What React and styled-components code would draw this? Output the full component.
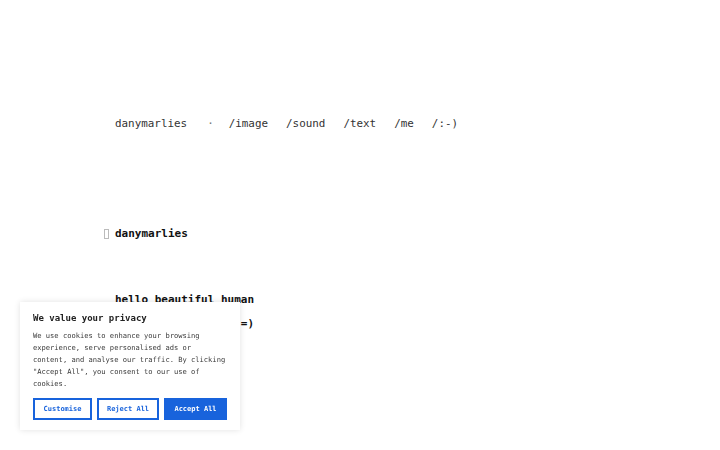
import React from "react";
import styled, { createGlobalStyle } from "styled-components";

const GlobalStyle = createGlobalStyle`
  html, body {
    margin: 0;
    padding: 0;
    background: #ffffff;
  }
  body {
    font-family: "DejaVu Sans Mono", "Liberation Mono", monospace;
    color: #2b2b2b;
  }
`;

const Page = styled.div`
  padding: 117px 0 0 115px;
  min-height: 450px;
  box-sizing: border-box;
`;

const Nav = styled.nav`
  display: flex;
  align-items: center;
  font-size: 10.9px;
  line-height: 14px;
  color: #333;
`;

const NavLink = styled.a`
  color: inherit;
  text-decoration: none;
  margin-right: ${p => p.gap || 18}px;
`;

const Dot = styled.span`
  margin-right: 15px;
  color: #777;
`;

const Main = styled.main`
  margin-top: 96px;
  font-size: 11px;
  font-weight: bold;
  color: #111;
`;

const Heading = styled.h1`
  position: relative;
  margin: 0;
  font-size: inherit;
  line-height: 14px;
`;

const Tofu = styled.span`
  position: absolute;
  left: -11px;
  top: 2px;
  width: 3px;
  height: 8px;
  border: 1px solid #bbb;
`;

const Intro = styled.p`
  margin: 47px 0 0;
  line-height: 24px;
`;

const Banner = styled.div`
  position: fixed;
  left: 20px;
  bottom: 20px;
  width: 220px;
  box-sizing: border-box;
  padding: 9px 13px 10px;
  background: #fff;
  box-shadow: 0 0 6px rgba(0, 0, 0, 0.12);
`;

const BannerTitle = styled.div`
  font-size: 9px;
  font-weight: bold;
  color: #212121;
  line-height: 14px;
`;

const BannerText = styled.p`
  margin: 5px 0 0;
  font-size: 7.1px;
  line-height: 12px;
  color: #3a3a3a;
`;

const Buttons = styled.div`
  display: flex;
  gap: 5px;
  margin-top: 8px;
`;

const Button = styled.button`
  font-family: inherit;
  font-size: 7px;
  font-weight: bold;
  height: 22px;
  width: ${p => p.w}px;
  padding: 0;
  border: 2px solid #1863dc;
  background: ${p => (p.primary ? "#1863dc" : "#fff")};
  color: ${p => (p.primary ? "#fff" : "#1863dc")};
  cursor: pointer;
`;

export default function App() {
  return (
    <>
      <GlobalStyle />
      <Page>
        <Nav>
          <NavLink href="#" gap={20}>danymarlies</NavLink>
          <Dot>·</Dot>
          <NavLink href="#">/image</NavLink>
          <NavLink href="#">/sound</NavLink>
          <NavLink href="#">/text</NavLink>
          <NavLink href="#">/me</NavLink>
          <NavLink href="#">/:-)</NavLink>
        </Nav>
        <Main>
          <Heading>
            <Tofu />
            danymarlies
          </Heading>
          <Intro>
            hello beautiful human
            <br />
            welcome to my site =)
          </Intro>
        </Main>
      </Page>
      <Banner>
        <BannerTitle>We value your privacy</BannerTitle>
        <BannerText>
          We use cookies to enhance your browsing experience, serve personalised
          ads or content, and analyse our traffic. By clicking "Accept All", you
          consent to our use of cookies.
        </BannerText>
        <Buttons>
          <Button w={59}>Customise</Button>
          <Button w={62}>Reject All</Button>
          <Button w={63} primary>Accept All</Button>
        </Buttons>
      </Banner>
    </>
  );
}
